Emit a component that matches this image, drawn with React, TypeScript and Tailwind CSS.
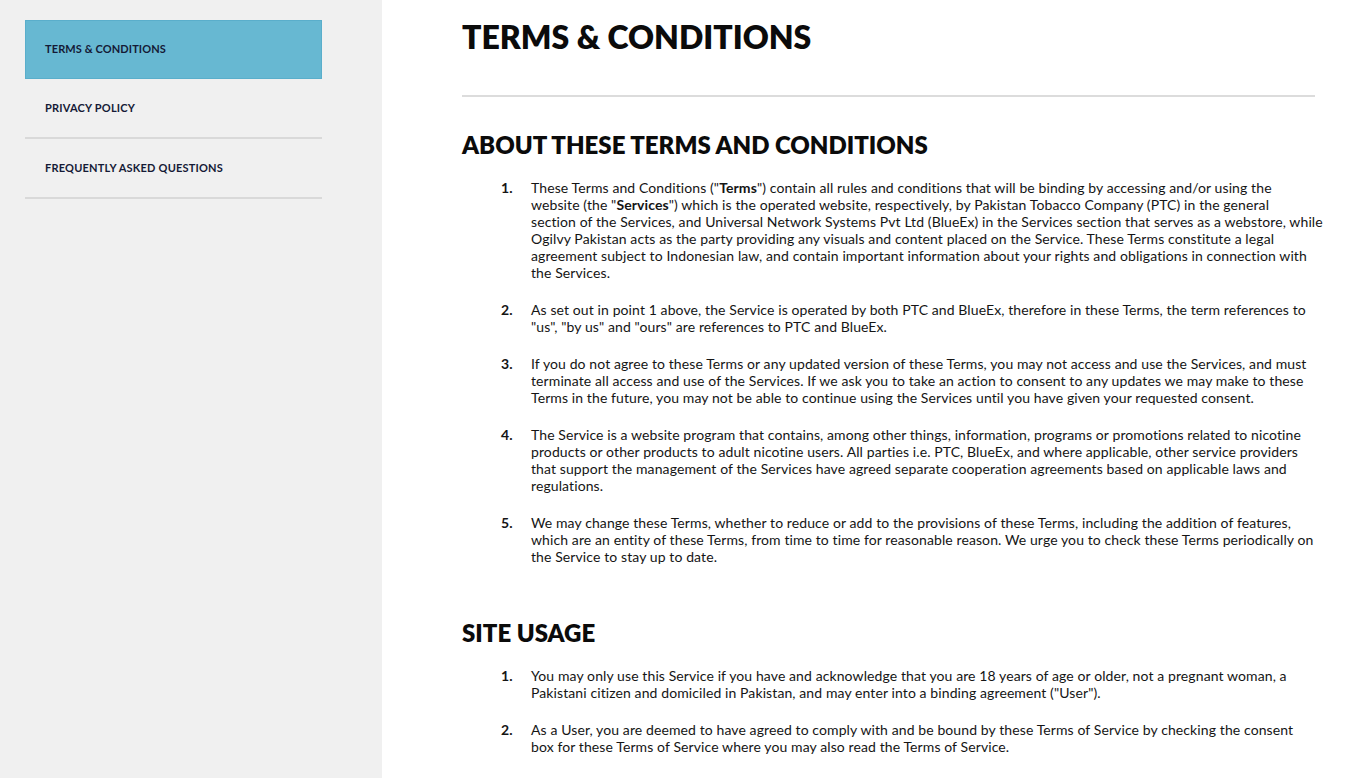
const nav = [
  { label: "TERMS & CONDITIONS", active: true },
  { label: "PRIVACY POLICY", active: false },
  { label: "FREQUENTLY ASKED QUESTIONS", active: false },
];

// each item is a list of lines, broken as on the live page
const about: React.ReactNode[][] = [
  [
    <>These Terms and Conditions ("<b>Terms</b>") contain all rules and conditions that will be binding by accessing and/or using the</>,
    <>website (the "<b>Services</b>") which is the operated website, respectively, by Pakistan Tobacco Company (PTC) in the general</>,
    "section of the Services, and Universal Network Systems Pvt Ltd (BlueEx) in the Services section that serves as a webstore, while",
    "Ogilvy Pakistan acts as the party providing any visuals and content placed on the Service. These Terms constitute a legal",
    "agreement subject to Indonesian law, and contain important information about your rights and obligations in connection with",
    "the Services.",
  ],
  [
    "As set out in point 1 above, the Service is operated by both PTC and BlueEx, therefore in these Terms, the term references to",
    '"us", "by us" and "ours" are references to PTC and BlueEx.',
  ],
  [
    "If you do not agree to these Terms or any updated version of these Terms, you may not access and use the Services, and must",
    "terminate all access and use of the Services. If we ask you to take an action to consent to any updates we may make to these",
    "Terms in the future, you may not be able to continue using the Services until you have given your requested consent.",
  ],
  [
    "The Service is a website program that contains, among other things, information, programs or promotions related to nicotine",
    "products or other products to adult nicotine users. All parties i.e. PTC, BlueEx, and where applicable, other service providers",
    "that support the management of the Services have agreed separate cooperation agreements based on applicable laws and",
    "regulations.",
  ],
  [
    "We may change these Terms, whether to reduce or add to the provisions of these Terms, including the addition of features,",
    "which are an entity of these Terms, from time to time for reasonable reason. We urge you to check these Terms periodically on",
    "the Service to stay up to date.",
  ],
];

const usage: React.ReactNode[][] = [
  [
    "You may only use this Service if you have and acknowledge that you are 18 years of age or older, not a pregnant woman, a",
    'Pakistani citizen and domiciled in Pakistan, and may enter into a binding agreement ("User").',
  ],
  [
    "As a User, you are deemed to have agreed to comply with and be bound by these Terms of Service by checking the consent",
    "box for these Terms of Service where you may also read the Terms of Service.",
  ],
];

function List({ items }: { items: React.ReactNode[][] }) {
  return (
    <ol className="flex flex-col gap-[20px] pl-[39px]">
      {items.map((lines, i) => (
        <li key={i} className="flex text-[14px] leading-[17px] tracking-[0.1px] text-[#151515]">
          <span className="w-[30px] shrink-0 font-bold">{i + 1}.</span>
          <p>
            {lines.map((l, j) => (
              <span key={j} className="block whitespace-nowrap">
                {l}
              </span>
            ))}
          </p>
        </li>
      ))}
    </ol>
  );
}

export default function App() {
  return (
    <div className="flex h-[778px] overflow-hidden bg-white font-['Lato',sans-serif]">
      <aside className="w-[382px] shrink-0 bg-[#f0f0f0] pl-[25px] pr-[60px] pt-[20px]">
        {nav.map((n) => (
          <div
            key={n.label}
            className={
              n.active
                ? "flex h-[59px] items-center border border-[#5aaecb] bg-[#67b8d2] pl-[19px] text-[11px] font-bold tracking-[0.1px] text-[#151a36]"
                : "flex h-[60px] items-center border-b-2 border-[#d9d9d9] pl-[20px] text-[11px] font-bold tracking-[0.2px] text-[#151a36]"
            }
          >
            {n.label}
          </div>
        ))}
      </aside>

      <main className="min-w-0 flex-1 pl-[80px] pr-[57px] pt-[17px]">
        <h1 className="text-[32px] font-extrabold leading-[40px] text-[#0b0b0b]">TERMS &amp; CONDITIONS</h1>
        <hr className="mt-[38px] border-t-2 border-[#dcdcdc]" />

        <h2 className="mt-[33px] text-[24px] font-extrabold leading-[30px] text-[#0b0b0b]">ABOUT THESE TERMS AND CONDITIONS</h2>
        <div className="mt-[19px]">
          <List items={about} />
        </div>

        <h2 className="mt-[53px] text-[24px] font-extrabold leading-[30px] text-[#0b0b0b]">SITE USAGE</h2>
        <div className="mt-[19px]">
          <List items={usage} />
        </div>
      </main>
    </div>
  );
}
